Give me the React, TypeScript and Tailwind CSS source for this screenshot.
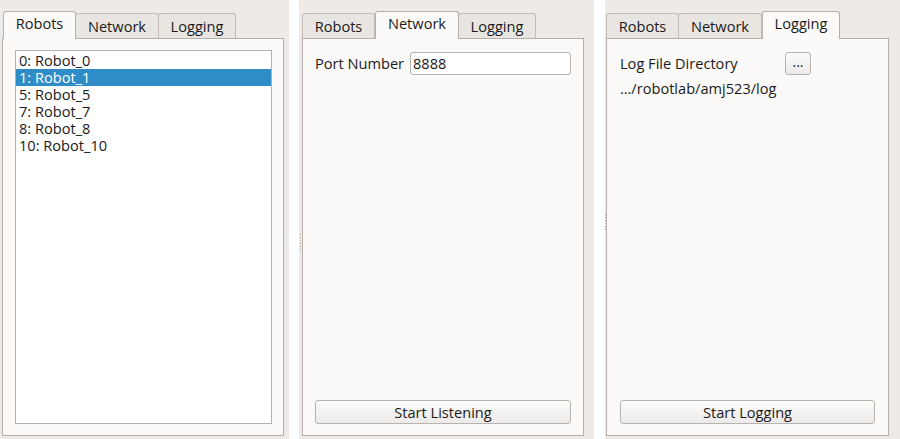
import React from "react";

const font = { fontFamily: '"Open Sans", "Noto Sans", sans-serif' };

function Tabs({ active }: { active: number }) {
  const tabs = [
    { label: "Robots", w: "w-[73px]" },
    { label: "Network", w: "w-[84px]" },
    { label: "Logging", w: "w-[78px]" },
  ];
  return (
    <div className="flex items-end h-[38px]">
      {tabs.map((t, i) =>
        i === active ? (
          <div
            key={t.label}
            className={`${t.w} h-[28px] -mb-px relative z-10 flex items-center justify-center bg-[#fcfaf8] border border-b-0 border-[#b5b0ab] rounded-t-[3px] text-[14.6px] text-[#1a1a1a]`}
          >
            <span className="-mt-[3px]">{t.label}</span>
          </div>
        ) : (
          <div
            key={t.label}
            className={`${t.w} h-[25px] flex items-center justify-center bg-[#e9e6e2] border border-b-0 border-[#c2bdb8] rounded-t-[3px] text-[14.6px] text-[#1a1a1a] ${
              i === 0 ? "" : "-ml-px"
            }`}
          >
            <span className="mt-[1px]">{t.label}</span>
          </div>
        )
      )}
    </div>
  );
}

function QButton({ label }: { label: string }) {
  return (
    <div className="h-[24px] flex items-center justify-center rounded-[3px] border border-[#b8b3ae] bg-gradient-to-b from-[#fbfbfa] to-[#ecebea] text-[14.6px] text-[#1a1a1a]">
      <span className="mt-px">{label}</span>
    </div>
  );
}

function Dots() {
  return (
    <div className="flex flex-col gap-[2px]">
      {[0, 1, 2, 3, 4, 5].map((i) => (
        <div key={i} className="w-px h-px bg-[#a8a39e]" />
      ))}
    </div>
  );
}

export default function App() {
  const robots = [
    "0: Robot_0",
    "1: Robot_1",
    "5: Robot_5",
    "7: Robot_7",
    "8: Robot_8",
    "10: Robot_10",
  ];
  return (
    <div className="w-[900px] h-[439px] bg-white flex overflow-hidden" style={font}>
      {/* Panel 1 */}
      <div className="w-[289px] h-full bg-[#edeae7] pl-[2px] flex flex-col">
        <div className="w-[282px] pl-px">
          <Tabs active={0} />
        </div>
        <div className="w-[282px] h-[398px] border border-[#b5b0ab] bg-[#fcfaf8] pt-[11px] pl-[12px]">
          <div className="w-[257px] h-[374px] border border-[#b5b0ab] bg-white pt-px">
            {robots.map((r, i) => (
              <div
                key={r}
                className={`h-[17px] pl-[3px] flex items-center text-[14.6px] leading-[17px] ${
                  i === 1 ? "bg-[#308cc6] text-white" : "text-[#1a1a1a]"
                }`}
              >
                {r}
              </div>
            ))}
          </div>
        </div>
      </div>

      <div className="w-[10px] h-full" />

      {/* Panel 2 */}
      <div className="w-[295px] h-full bg-[#edeae7] flex">
        <div className="w-[3px] flex items-center justify-center pt-[44px]">
          <Dots />
        </div>
        <div className="flex flex-col">
          <div className="w-[282px]">
            <Tabs active={1} />
          </div>
          <div className="w-[282px] h-[398px] border border-[#b5b0ab] bg-[#fcfaf8] px-[12px] pt-[13px] pb-[11px] flex flex-col justify-between">
            <div className="flex items-center">
              <span className="w-[95px] shrink-0 whitespace-nowrap text-[14.6px] text-[#1a1a1a]">Port Number</span>
              <div className="w-[161px] shrink-0 h-[23px] border border-[#b8b3ae] rounded-[3px] bg-white flex items-center pl-[2px] text-[14.6px] text-[#1a1a1a]">
                8888
              </div>
            </div>
            <QButton label="Start Listening" />
          </div>
        </div>
      </div>

      <div className="w-[11px] h-full" />

      {/* Panel 3 */}
      <div className="w-[295px] h-full bg-[#edeae7] flex">
        <div className="w-px flex items-center justify-center pt-[4px]">
          <Dots />
        </div>
        <div className="flex flex-col">
          <div className="w-[283px]">
            <Tabs active={2} />
          </div>
          <div className="w-[283px] h-[398px] border border-[#b5b0ab] bg-[#fcfaf8] px-[13px] pt-[13px] pb-[11px] flex flex-col justify-between">
            <div className="flex flex-col">
              <div className="flex items-center">
                <span className="w-[165px] shrink-0 whitespace-nowrap text-[14.6px] text-[#1a1a1a]">Log File Directory</span>
                <div className="w-[26px] shrink-0 h-[23px] rounded-[3px] border border-[#b8b3ae] bg-gradient-to-b from-[#fbfbfa] to-[#ecebea] flex items-center justify-center text-[14px] text-[#1a1a1a]">
                  <span className="-mt-[4px]">...</span>
                </div>
              </div>
              <div className="mt-[3px] whitespace-nowrap text-[14.6px] text-[#1a1a1a]">…/robotlab/amj523/log</div>
            </div>
            <QButton label="Start Logging" />
          </div>
        </div>
      </div>
    </div>
  );
}
